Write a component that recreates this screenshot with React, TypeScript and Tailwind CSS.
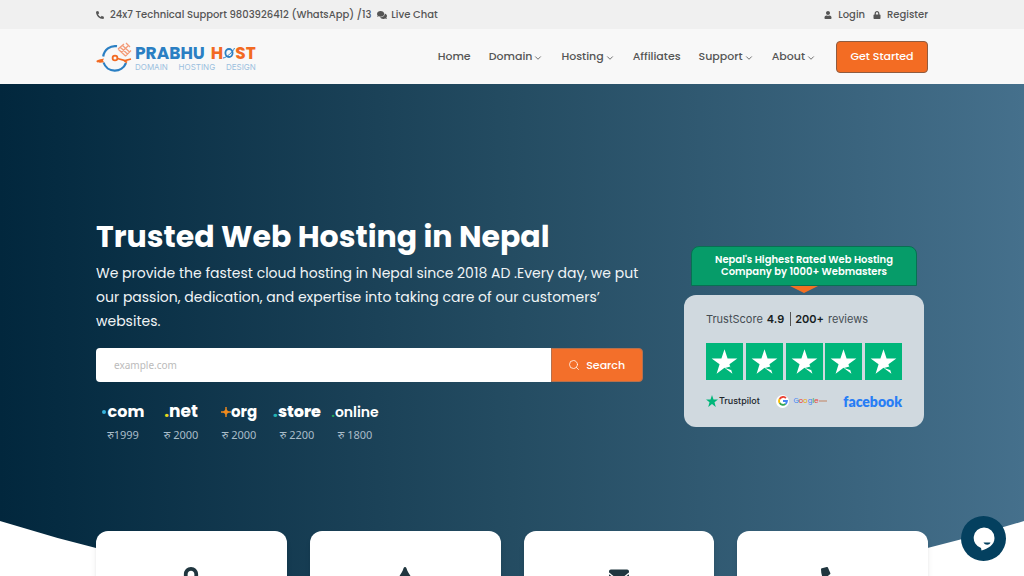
import { FaComments, FaEnvelope, FaLock, FaPhoneAlt, FaTint, FaUser } from "react-icons/fa";
import { ChevronDown, Search } from "lucide-react";

const navItems = [
  { label: "Home", menu: false },
  { label: "Domain", menu: true },
  { label: "Hosting", menu: true },
  { label: "Affiliates", menu: false },
  { label: "Support", menu: true },
  { label: "About", menu: true },
];

const features = [
  { id: "security", icon: FaLock, size: "size-6" },
  { id: "speed", icon: FaTint, size: "size-6" },
  { id: "email", icon: FaEnvelope, size: "size-5" },
  { id: "phone", icon: FaPhoneAlt, size: "size-6" },
];

const LogoMark = () => (
  <svg viewBox="0 0 36 30" className="h-[30px] w-9" fill="none">
    <path d="M21 4.2A12 12 0 0 0 7.2 14.5M7.5 20.5A12 12 0 0 0 30 21" stroke="#2b7fc3" strokeWidth="2.2" />
    <path d="M8 16.5C2 17.5 0 18.5 .5 19.5C1 21 5 20.8 8 20.3L7 18.6Z" fill="#f26a22" />
    <path d="M21.5 16.5L29 18.5L35 17M31 20.5L28 18.5" stroke="#f26a22" strokeWidth="1.8" />
    <circle cx="19" cy="16" r="2.4" stroke="#f26a22" strokeWidth="1.8" />
    <path d="M22 7L29.5 14M24 5L31.5 12M26 3L33.5 10M22 7L28 2M25 10.5L32 4M29.5 14L35 8.5M30 1L34 5" stroke="#f39b78" strokeWidth="1.3" />
  </svg>
);

const Logo = () => (
  <a href="#" aria-label="Prabhu Host" className="flex items-center gap-[3px]">
    <LogoMark />
    <span className="flex flex-col">
      <span className="flex items-center text-[17px] leading-5 font-bold">
        <span className="text-[#2b7fc3]">PRABHU</span>
        <span className="ml-1.5 text-[#f26a22]">H</span>
        <svg viewBox="0 0 12 14" className="h-3.5 w-3" fill="none">
          <ellipse cx="6" cy="7" rx="3.6" ry="4" stroke="#2b7fc3" strokeWidth="1.8" />
          <path d="M0 12C3 12 10 6 11.5 2" stroke="#2b7fc3" strokeWidth="1" />
        </svg>
        <span className="text-[#f26a22]">ST</span>
      </span>
      <span className="flex justify-between font-['Inter',sans-serif] text-[8px] leading-2 text-[#9bbfde]">
        <span>DOMAIN</span>
        <span>HOSTING</span>
        <span>DESIGN</span>
      </span>
    </span>
  </a>
);

const TopBar = () => (
  <div className="flex h-[29px] items-center justify-between bg-[#f0f0f0] px-24 text-[10px] font-medium text-[#555]">
    <div className="flex items-center gap-1.5">
      <a href="#" className="flex items-center gap-1.5">
        <FaPhoneAlt className="size-2" />
        24x7 Technical Support 9803926412 (WhatsApp) /13
      </a>
      <a href="#" className="flex items-center gap-1">
        <FaComments className="size-2.5" />
        Live Chat
      </a>
    </div>
    <div className="flex items-center gap-2">
      <a href="#" className="flex items-center gap-1.5">
        <FaUser className="size-2" />
        Login
      </a>
      <a href="#" className="flex items-center gap-1.5">
        <FaLock className="size-2" />
        Register
      </a>
    </div>
  </div>
);

const Header = () => (
  <header className="flex h-[55px] items-center justify-between bg-[#f8f8f8] px-24">
    <Logo />
    <nav className="flex items-center gap-[18px] text-[11px] font-medium text-[#555]">
      {navItems.map((item) => (
        <a key={item.label} href="#" className="flex items-center gap-px">
          {item.label}
          {item.menu && <ChevronDown className="mt-0.5 size-2.5" strokeWidth={2} />}
        </a>
      ))}
      <button className="ml-0.5 h-8 w-[92px] rounded-sm border border-[#8f5c40] bg-[#f36c23] text-white">
        Get Started
      </button>
    </nav>
  </header>
);

const DomainPrices = () => (
  <ul className="mt-5 flex gap-2 pl-0.5 text-[11px] text-[#a9bcc8]">
    <li className="flex w-[50px] flex-col items-center gap-[5px]">
      <span className="flex h-5 items-center gap-0.5 text-[16px] font-bold text-white">
        <i className="size-1 rounded-full bg-[#35b3dc]" />
        com
      </span>
      <span className="font-['Noto_Sans','Poppins',sans-serif] leading-4 whitespace-nowrap">रु1999</span>
    </li>
    <li className="flex w-[50px] flex-col items-center gap-[5px]">
      <span className="flex h-5 items-center text-[17px] font-bold text-white">
        <span className="text-[#e8d91c]">.</span>net
      </span>
      <span className="font-['Noto_Sans','Poppins',sans-serif] leading-4 whitespace-nowrap">रु 2000</span>
    </li>
    <li className="flex w-[50px] flex-col items-center gap-[5px]">
      <span className="flex h-5 items-center text-[15px] font-bold text-white">
        <svg viewBox="0 0 10 10" className="size-2.5">
          <path d="M5 0V10M0 5H10" stroke="#f08a1d" strokeWidth="1.4" />
          <path d="M5 2L8 5L5 8L2 5Z" fill="#f08a1d" />
        </svg>
        org
      </span>
      <span className="font-['Noto_Sans','Poppins',sans-serif] leading-4 whitespace-nowrap">रु 2000</span>
    </li>
    <li className="flex w-[50px] flex-col items-center gap-[5px]">
      <span className="flex h-5 items-center text-[16px] font-extrabold text-white">
        <span className="text-[#23b5b5]">.</span>store
      </span>
      <span className="font-['Noto_Sans','Poppins',sans-serif] leading-4 whitespace-nowrap">रु 2200</span>
    </li>
    <li className="flex w-[50px] flex-col items-center gap-[5px]">
      <span className="flex h-5 items-center text-[14px] font-semibold text-white">
        <span className="text-[#27a55b]">.</span>online
      </span>
      <span className="font-['Noto_Sans','Poppins',sans-serif] leading-4 whitespace-nowrap">रु 1800</span>
    </li>
  </ul>
);

const TrustBadge = () => (
  <div className="mr-1 ml-auto flex w-60 flex-col items-center pt-[29px]">
    <p className="w-[226px] rounded-t-lg border border-[#087052] bg-[#069c69] py-[7px] text-center text-[10px] leading-3 font-semibold text-white">
      Nepal's Highest Rated Web Hosting
      <br />
      Company by 1000+ Webmasters
    </p>
    <svg viewBox="0 0 28 7" className="h-[7px] w-7">
      <path d="M0 0H28L14 7Z" fill="#f37022" />
    </svg>
    <div className="mt-0.5 w-full rounded-xl bg-[#d0d9df] px-[22px] pt-4 pb-4">
      <p className="flex items-center font-['Inter',sans-serif] text-[11px] leading-4 text-[#454d53]">
        TrustScore <span className="ml-1 font-semibold text-[#171d22]">4.9</span>
        <span className="mr-1 ml-1.5 h-3.5 border-l border-[#555]" />
        <span className="mr-1 font-semibold text-[#171d22]">200+</span> reviews
      </p>
      <div className="mt-4 flex justify-between">
        {[1, 2, 3, 4, 5].map((n) => (
          <svg key={n} viewBox="0 0 36 36" className="size-[37px] bg-[#00b67a]">
            <path d="M18 6L21 15H30.5L22.8 20.6L25.7 29.8L18 24.2L10.3 29.8L13.2 20.6L5.5 15H15Z" fill="#fff" />
            <path d="M18.5 24.3L23.8 22.8L25 26.6" fill="#00b67a" />
          </svg>
        ))}
      </div>
      <div className="mt-[11px] flex h-5 items-center justify-between">
        <span className="flex items-center gap-px font-['Inter',sans-serif] text-[9px] font-medium text-[#20262b]">
          <svg viewBox="0 0 24 24" className="size-3">
            <path d="M12 0L15 9H24L17 14.5L19.5 24L12 18L4.5 24L7 14.5L0 9H9Z" fill="#00b67a" />
          </svg>
          Trustpilot
        </span>
        <span className="flex items-center gap-1">
          <span className="flex size-[13px] items-center justify-center rounded-full bg-white">
            <svg viewBox="0 0 24 24" className="size-2.5" fill="none" strokeWidth="4.5">
              <path d="M19 5A9.5 9.5 0 0 0 4 7" stroke="#ea4335" />
              <path d="M4 7A9.5 9.5 0 0 0 4 17" stroke="#fbbc05" />
              <path d="M4 17A9.5 9.5 0 0 0 18 19" stroke="#34a853" />
              <path d="M12 12H21.5A9.5 9.5 0 0 1 18 19" stroke="#4285f4" />
            </svg>
          </span>
          <span className="flex items-center text-[7px] text-[#4285f4]">
            G<span className="text-[#ea4335]">o</span>
            <span className="text-[#e9ab05]">o</span>g<span className="text-[#34a853]">l</span>
            <span className="text-[#ea4335]">e</span>
            <i className="h-0.5 w-2 bg-[#c9aea0]" />
          </span>
        </span>
        <span className="font-['Lato',sans-serif] text-[14px] font-extrabold text-[#287ef5]">facebook</span>
      </div>
    </div>
  </div>
);

const Hero = () => (
  <section className="bg-linear-to-r from-[#02273d] via-[#244c62] to-[#45708c]">
    <div className="grid grid-cols-3 gap-6 px-24 pt-[133px]">
      <div className="col-span-2">
        <h1 className="text-[30px] leading-10 font-bold whitespace-nowrap text-white">Trusted Web Hosting in Nepal</h1>
        <p className="mt-1 text-[14px] leading-6 text-[#f0f4f6]">
          We provide the fastest cloud hosting in Nepal since 2018 AD .Every day, we put our passion,
          dedication, and expertise into taking care of our customers’ websites.
        </p>
        <form className="mt-[15px] flex h-[34px]" onSubmit={(e) => e.preventDefault()}>
          <input
            type="text"
            aria-label="Domain name"
            placeholder="example.com"
            className="min-w-0 flex-1 rounded-l-sm bg-white px-[18px] font-['Noto_Sans',sans-serif] text-[10px] text-[#333] outline-none placeholder:text-[#bbb]"
          />
          <button className="flex w-[92px] items-center justify-center gap-1.5 rounded-r-sm border border-[#b5704d] bg-[#f36f2a] text-[11px] font-medium text-white">
            <Search className="size-3" strokeWidth={1.5} />
            Search
          </button>
        </form>
        <DomainPrices />
      </div>
      <TrustBadge />
    </div>

    <div className="relative mt-[88px]">
      <svg viewBox="0 0 1024 260" preserveAspectRatio="none" className="absolute inset-x-0 -top-2.5 h-[260px] w-full">
        <path d="M0 0Q512 160 1024 0V260H0Z" fill="#fff" />
      </svg>
      <div className="relative grid grid-cols-4 gap-[23px] px-24">
        {features.map((item) => (
          <div key={item.id} className="flex h-60 justify-center rounded-xl bg-white pt-9 text-[#20363f] shadow-md">
            <item.icon className={item.size} />
          </div>
        ))}
      </div>
    </div>
  </section>
);

const App = () => (
  <div className="relative h-screen overflow-hidden bg-white font-['Poppins','Inter','Noto_Sans',sans-serif]">
    <TopBar />
    <Header />
    <Hero />
    <button
      aria-label="Open chat"
      className="fixed right-[18px] bottom-[15px] flex size-[45px] items-center justify-center rounded-full bg-[#04405f]"
    >
      <svg viewBox="0 0 22 24" className="h-6 w-[22px]">
        <path d="M11 0.5A10.5 10.5 0 0 1 21.5 11C21.5 18 15 21.5 8.5 23.5L8 21A10.5 10.5 0 0 1 11 0.5Z" fill="#fff" />
        <path d="M10.5 15.5H17.5C16.5 18.5 12 18.5 10.5 15.5Z" fill="#04405f" />
      </svg>
    </button>
  </div>
);

export default App;
